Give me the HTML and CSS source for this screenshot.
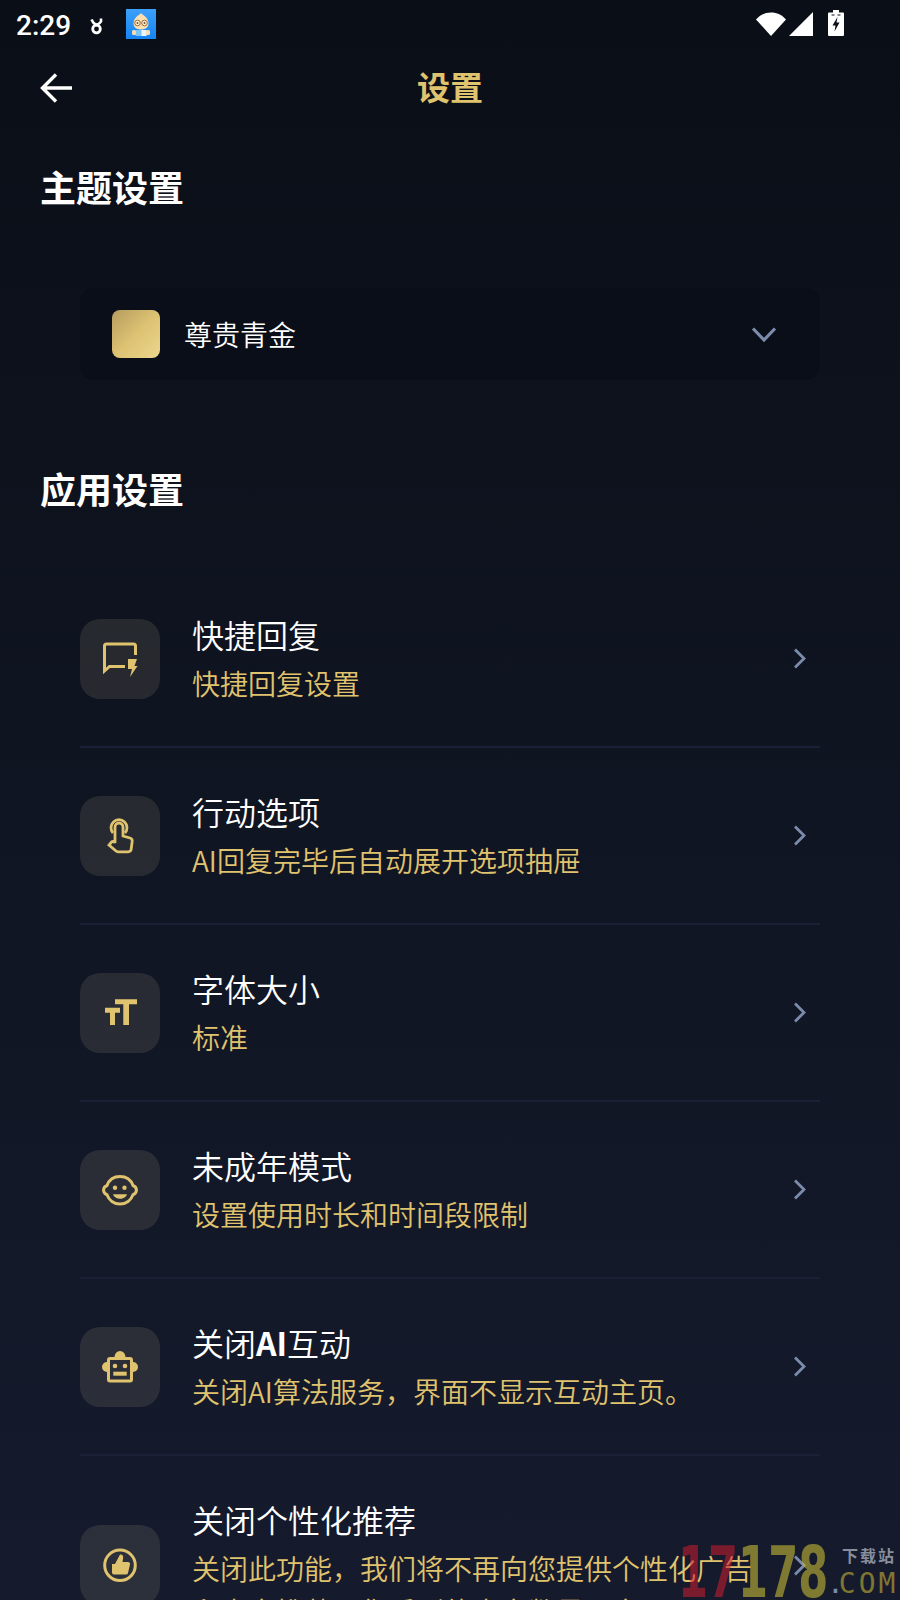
FILE: index.html
```html
<!DOCTYPE html>
<html lang="zh-CN">
<head>
  <meta charset="UTF-8">
  <title>设置</title>
  <link rel="stylesheet" href="styles.css">
</head>
<body>
  <div class="page">
    <div class="status-bar">
      <span class="time">2:29</span>
      <svg class="notif" width="14" height="18" viewBox="0 0 14 18"><circle cx="6.500" cy="12" r="3.800" fill="none" stroke="#fff" stroke-width="2.800"/><path d="M1.500 2.500c1 2.800 3 4.500 5 5.500 2.500-1 4-2.500 4.500-3.500M11 1.500v3.500" fill="none" stroke="#fff" stroke-width="2.600"/></svg>
      <svg class="app-icon" width="30" height="30" viewBox="0 0 30 30">
        <defs><linearGradient id="appBg" x1="0" y1="0" x2="0" y2="1"><stop offset="0" stop-color="#3ca0fb"/><stop offset="1" stop-color="#1584f4"/></linearGradient></defs>
        <rect width="30" height="30" fill="url(#appBg)"/>
        <path d="M15 4c1 2 7 3.500 7.500 10 .3 4.500-3.500 6.500-7.500 6.500S7.200 18.500 7.500 14C8 7.500 14 6 15 4z" fill="#fbdfae"/>
        <circle cx="11.500" cy="14" r="2.800" fill="#fff1d4" stroke="#9b6a3b"/>
        <circle cx="18.500" cy="14" r="2.800" fill="#fff1d4" stroke="#9b6a3b"/>
        <circle cx="11.500" cy="14" r=".9" fill="#6b4524"/>
        <circle cx="18.500" cy="14" r=".9" fill="#6b4524"/>
        <rect x="9.500" y="21" width="11" height="6" fill="#7cc4f4"/>
        <rect x="15.500" y="21" width="5" height="6" fill="#e9f6ff"/>
        <rect x="6" y="21" width="4" height="5" rx="1.500" fill="#fbdfae"/>
        <rect x="20" y="21" width="4" height="5" rx="1.500" fill="#fbdfae"/>
      </svg>
      <div class="status-right">
        <svg width="30" height="24" viewBox="0 0 30 24"><path d="M0 7.500C4 3 9 .5 15 .5S26 3 30 7.500L15 24z" fill="#fff"/></svg>
        <svg width="24" height="24" viewBox="0 0 24 24"><path d="M24 0v24H0z" fill="#fff"/></svg>
        <svg class="battery" width="16" height="26" viewBox="0 0 16 26"><path d="M5 0h6v2.500h4a1 1 0 0 1 1 1V25a1 1 0 0 1-1 1H1a1 1 0 0 1-1-1V3.500a1 1 0 0 1 1-1h4z" fill="#fff"/><path d="M9.500 7L4.500 15.500H7.500L6.500 21.500L11.500 12.500H8.500z" fill="#0a0f18"/><path d="M3.500 5h3M9.500 5h3" stroke="#0a0f18" stroke-width="1"/></svg>
      </div>
    </div>

    <header class="topbar">
      <svg class="back" width="36" height="36" viewBox="0 0 36 36"><path d="M34 18H5M18 4.500L4.500 18 18 31.500" fill="none" stroke="#fff" stroke-width="3.400"/></svg>
      <h1>设置</h1>
    </header>

    <h2 class="section-title first">主题设置</h2>
    <div class="theme-card">
      <span class="swatch"></span>
      <span class="theme-name">尊贵青金</span>
      <svg class="theme-arrow" width="26" height="17" viewBox="0 0 26 17"><path d="M2 2.500L13 14 24 2.500" fill="none" stroke="#7b8bab" stroke-width="3.200"/></svg>
    </div>

    <h2 class="section-title second">应用设置</h2>
    <div class="list">
      <div class="row">
        <div class="icon-box">
          <svg width="80" height="80" viewBox="0 0 80 80"><path d="M55.500 36v-9a2 2 0 0 0-2-2h-27a2 2 0 0 0-2 2v25l5-4.500H45" fill="none" stroke="#e0c36e" stroke-width="3"/><path d="M48 40h9l-2.500 7h3L50 58l2-8h-4z" fill="#e0c36e"/></svg>
        </div>
        <div class="row-text">
          <div class="row-title">快捷回复</div>
          <div class="row-sub">快捷回复设置</div>
        </div>
        <svg class="chevron" width="13" height="21" viewBox="0 0 13 21"><path d="M2 1.500l9 9-9 9" fill="none" stroke="#7b8bab" stroke-width="2.800"/></svg>
      </div>
      <div class="row">
        <div class="icon-box">
          <svg width="80" height="80" viewBox="0 0 80 80" fill="none" stroke="#e0c36e" stroke-width="2.800"><path d="M33 37a8 8 0 1 1 12 0"/><path d="M35 47V31a4 4 0 0 1 8 0v9l7 2a3 3 0 0 1 2.200 3.200l-1 8a3 3 0 0 1-3 2.600H38a3 3 0 0 1-2-.8L29 49l2-2.400a2.200 2.200 0 0 1 4 .4z"/></svg>
        </div>
        <div class="row-text">
          <div class="row-title">行动选项</div>
          <div class="row-sub">AI回复完毕后自动展开选项抽屉</div>
        </div>
        <svg class="chevron" width="13" height="21" viewBox="0 0 13 21"><path d="M2 1.500l9 9-9 9" fill="none" stroke="#7b8bab" stroke-width="2.800"/></svg>
      </div>
      <div class="row">
        <div class="icon-box">
          <svg width="80" height="80" viewBox="0 0 80 80" fill="#e0c36e"><path d="M25 34.700h15v5h-5V52h-5V39.700h-5z"/><path d="M35 26.300h22v5h-8V52h-5.700V31.300H35z"/></svg>
        </div>
        <div class="row-text">
          <div class="row-title">字体大小</div>
          <div class="row-sub">标准</div>
        </div>
        <svg class="chevron" width="13" height="21" viewBox="0 0 13 21"><path d="M2 1.500l9 9-9 9" fill="none" stroke="#7b8bab" stroke-width="2.800"/></svg>
      </div>
      <div class="row">
        <div class="icon-box">
          <svg width="80" height="80" viewBox="0 0 80 80"><path d="M40 26.500c6 0 11 3.500 13 9a4.800 4.800 0 0 1 0 9.200c-2 5.500-7 9.300-13 9.300s-11-3.800-13-9.300a4.800 4.800 0 0 1 0-9.200c2-5.500 7-9 13-9z" fill="none" stroke="#e0c36e" stroke-width="3"/><circle cx="35" cy="37.700" r="2.200" fill="#e0c36e"/><circle cx="44.500" cy="37.700" r="2.200" fill="#e0c36e"/><path d="M33 44.300h14c-.8 2.800-3.800 4.500-7 4.500s-6.200-1.700-7-4.500z" fill="#e0c36e"/></svg>
        </div>
        <div class="row-text">
          <div class="row-title">未成年模式</div>
          <div class="row-sub">设置使用时长和时间段限制</div>
        </div>
        <svg class="chevron" width="13" height="21" viewBox="0 0 13 21"><path d="M2 1.500l9 9-9 9" fill="none" stroke="#7b8bab" stroke-width="2.800"/></svg>
      </div>
      <div class="row">
        <div class="icon-box">
          <svg width="80" height="80" viewBox="0 0 80 80" fill="#e0c36e"><path d="M34.500 30a5.500 6 0 0 1 11 0z"/><path d="M27 35a5 5 0 0 0 0 10zM53 35a5 5 0 0 1 0 10z"/><rect x="28.500" y="31.500" width="23" height="22.500" rx="1.500" fill="none" stroke="#e0c36e" stroke-width="3"/><circle cx="35" cy="39" r="2.300"/><circle cx="45" cy="39" r="2.300"/><rect x="33.300" y="44.700" width="13.400" height="4"/></svg>
        </div>
        <div class="row-text">
          <div class="row-title">关闭<span class="latin-bold">AI</span>互动</div>
          <div class="row-sub">关闭AI算法服务，界面不显示互动主页。</div>
        </div>
        <svg class="chevron" width="13" height="21" viewBox="0 0 13 21"><path d="M2 1.500l9 9-9 9" fill="none" stroke="#7b8bab" stroke-width="2.800"/></svg>
      </div>
      <div class="row last">
        <div class="icon-box">
          <svg width="80" height="80" viewBox="0 0 80 80"><circle cx="40" cy="40.300" r="15.300" fill="none" stroke="#e0c36e" stroke-width="3"/><path d="M32 39h3l5-9.500c2-.5 3.500 1 3.200 3l-.7 4.500H48a2 2 0 0 1 2 2.500l-2 8.500a2 2 0 0 1-2 1.500H34a2 2 0 0 1-2-2z" fill="#e0c36e"/></svg>
        </div>
        <div class="row-text">
          <div class="row-title">关闭个性化推荐</div>
          <div class="row-sub">关闭此功能，我们将不再向您提供个性化广告和内容推荐，您看到的内容数量不变。</div>
        </div>
        <svg class="chevron" width="13" height="21" viewBox="0 0 13 21"><path d="M2 1.500l9 9-9 9" fill="none" stroke="#7b8bab" stroke-width="2.800"/></svg>
      </div>
    </div>

    <div class="watermark">
      <span class="wm-digits"><span class="wm-red">17</span><span class="wm-olive">178</span></span>
      <div class="wm-side">
        <span class="wm-site">下载站</span>
        <span class="wm-com"><span class="wm-dot">.</span>COM</span>
      </div>
    </div>
  </div>
</body>
</html>
```

FILE: styles.css
```css
html, body {
  margin: 0;
  padding: 0;
  background: #0a0f18;
}
.page {
  position: relative;
  width: 900px;
  height: 1600px;
  overflow: hidden;
  background: linear-gradient(#0a0e17, #0c111b 20%, #151b2d);
  color: #fff;
  font-family: "Noto Sans CJK SC", "Noto Sans", sans-serif;
}
.status-bar {
  height: 50px;
  display: flex;
  align-items: center;
  padding-left: 16px;
}
.time {
  font-family: Roboto, sans-serif;
  font-size: 28px;
  font-weight: 500;
  width: 74px;
}
.notif {
  margin-top: 2px;
}
.app-icon {
  margin-left: 22px;
  margin-top: -2px;
}
.status-right {
  margin-left: auto;
  margin-right: 56px;
  margin-top: -2px;
  display: flex;
  align-items: center;
  gap: 3px;
}
.battery {
  margin-left: 12px;
  margin-top: -2px;
}
.topbar {
  height: 76px;
  display: flex;
  align-items: center;
  justify-content: center;
  position: relative;
}
.back {
  position: absolute;
  left: 38px;
  top: 20px;
}
h1 {
  margin: -4px 0 0;
  font-size: 33px;
  font-weight: 700;
  color: #e0c36e;
}
.section-title {
  margin: 0;
  padding-left: 40px;
  font-size: 36px;
  font-weight: 700;
  line-height: 52px;
}
.section-title.first {
  margin-top: 34px;
}
.section-title.second {
  margin-top: 82px;
}
.theme-card {
  margin: 76px 80px 0;
  height: 92px;
  box-sizing: border-box;
  padding: 0 43px 0 32px;
  display: flex;
  align-items: center;
  background: #0a0e18;
  border-radius: 14px;
}
.swatch {
  width: 48px;
  height: 48px;
  border-radius: 8px;
  background: linear-gradient(135deg, #b59c5e, #dcc272 50%, #ecd78e);
}
.theme-name {
  margin-left: 24px;
  font-size: 28px;
  font-weight: 350;
}
.theme-arrow {
  margin-left: auto;
}
.list {
  margin: 57px 80px 0;
}
.row {
  display: flex;
  align-items: center;
  padding: 41px 14px 41px 0;
  border-bottom: 2px solid #1a2136;
}
.row.last {
  border-bottom: 0;
}
.icon-box {
  flex: none;
  width: 80px;
  height: 80px;
  border-radius: 20px;
  background: rgba(255, 235, 190, 0.1);
}
.icon-box svg {
  display: block;
}
.row-text {
  margin-left: 32px;
  width: 573px;
}
.row-title {
  font-size: 32px;
  font-weight: 350;
  line-height: 44px;
}
.latin-bold {
  font-weight: 700;
}
.row-sub {
  margin-top: 6px;
  font-size: 28px;
  font-weight: 350;
  line-height: 43px;
  color: #e0c36e;
}
.chevron {
  margin-left: auto;
}
.watermark {
  position: absolute;
  left: 678px;
  top: 1536px;
  width: 222px;
  height: 64px;
  pointer-events: none;
}
.wm-digits {
  position: absolute;
  left: 0;
  top: 0;
  font-family: "DejaVu Sans", sans-serif;
  font-weight: 700;
  font-size: 72px;
  line-height: 72px;
  white-space: nowrap;
  transform: scaleX(0.6);
  transform-origin: 0 0;
}
.wm-red {
  color: rgba(205, 28, 48, 0.55);
}
.wm-olive {
  color: rgba(215, 200, 55, 0.55);
}
.wm-side {
  position: absolute;
  left: 154px;
  top: 9px;
  display: flex;
  flex-direction: column;
  align-items: flex-start;
}
.wm-site {
  margin-left: 10px;
  font-size: 16px;
  font-weight: 700;
  letter-spacing: 2px;
  line-height: 20px;
  color: #8a8e9c;
}
.wm-com {
  margin: 3px 0 0 -5px;
  font-family: "DejaVu Sans Mono", monospace;
  font-size: 28px;
  line-height: 32px;
  letter-spacing: 3px;
  color: #7f7631;
  white-space: nowrap;
}
.wm-dot {
  color: #7b8bab;
  margin-right: -8px;
}
```
